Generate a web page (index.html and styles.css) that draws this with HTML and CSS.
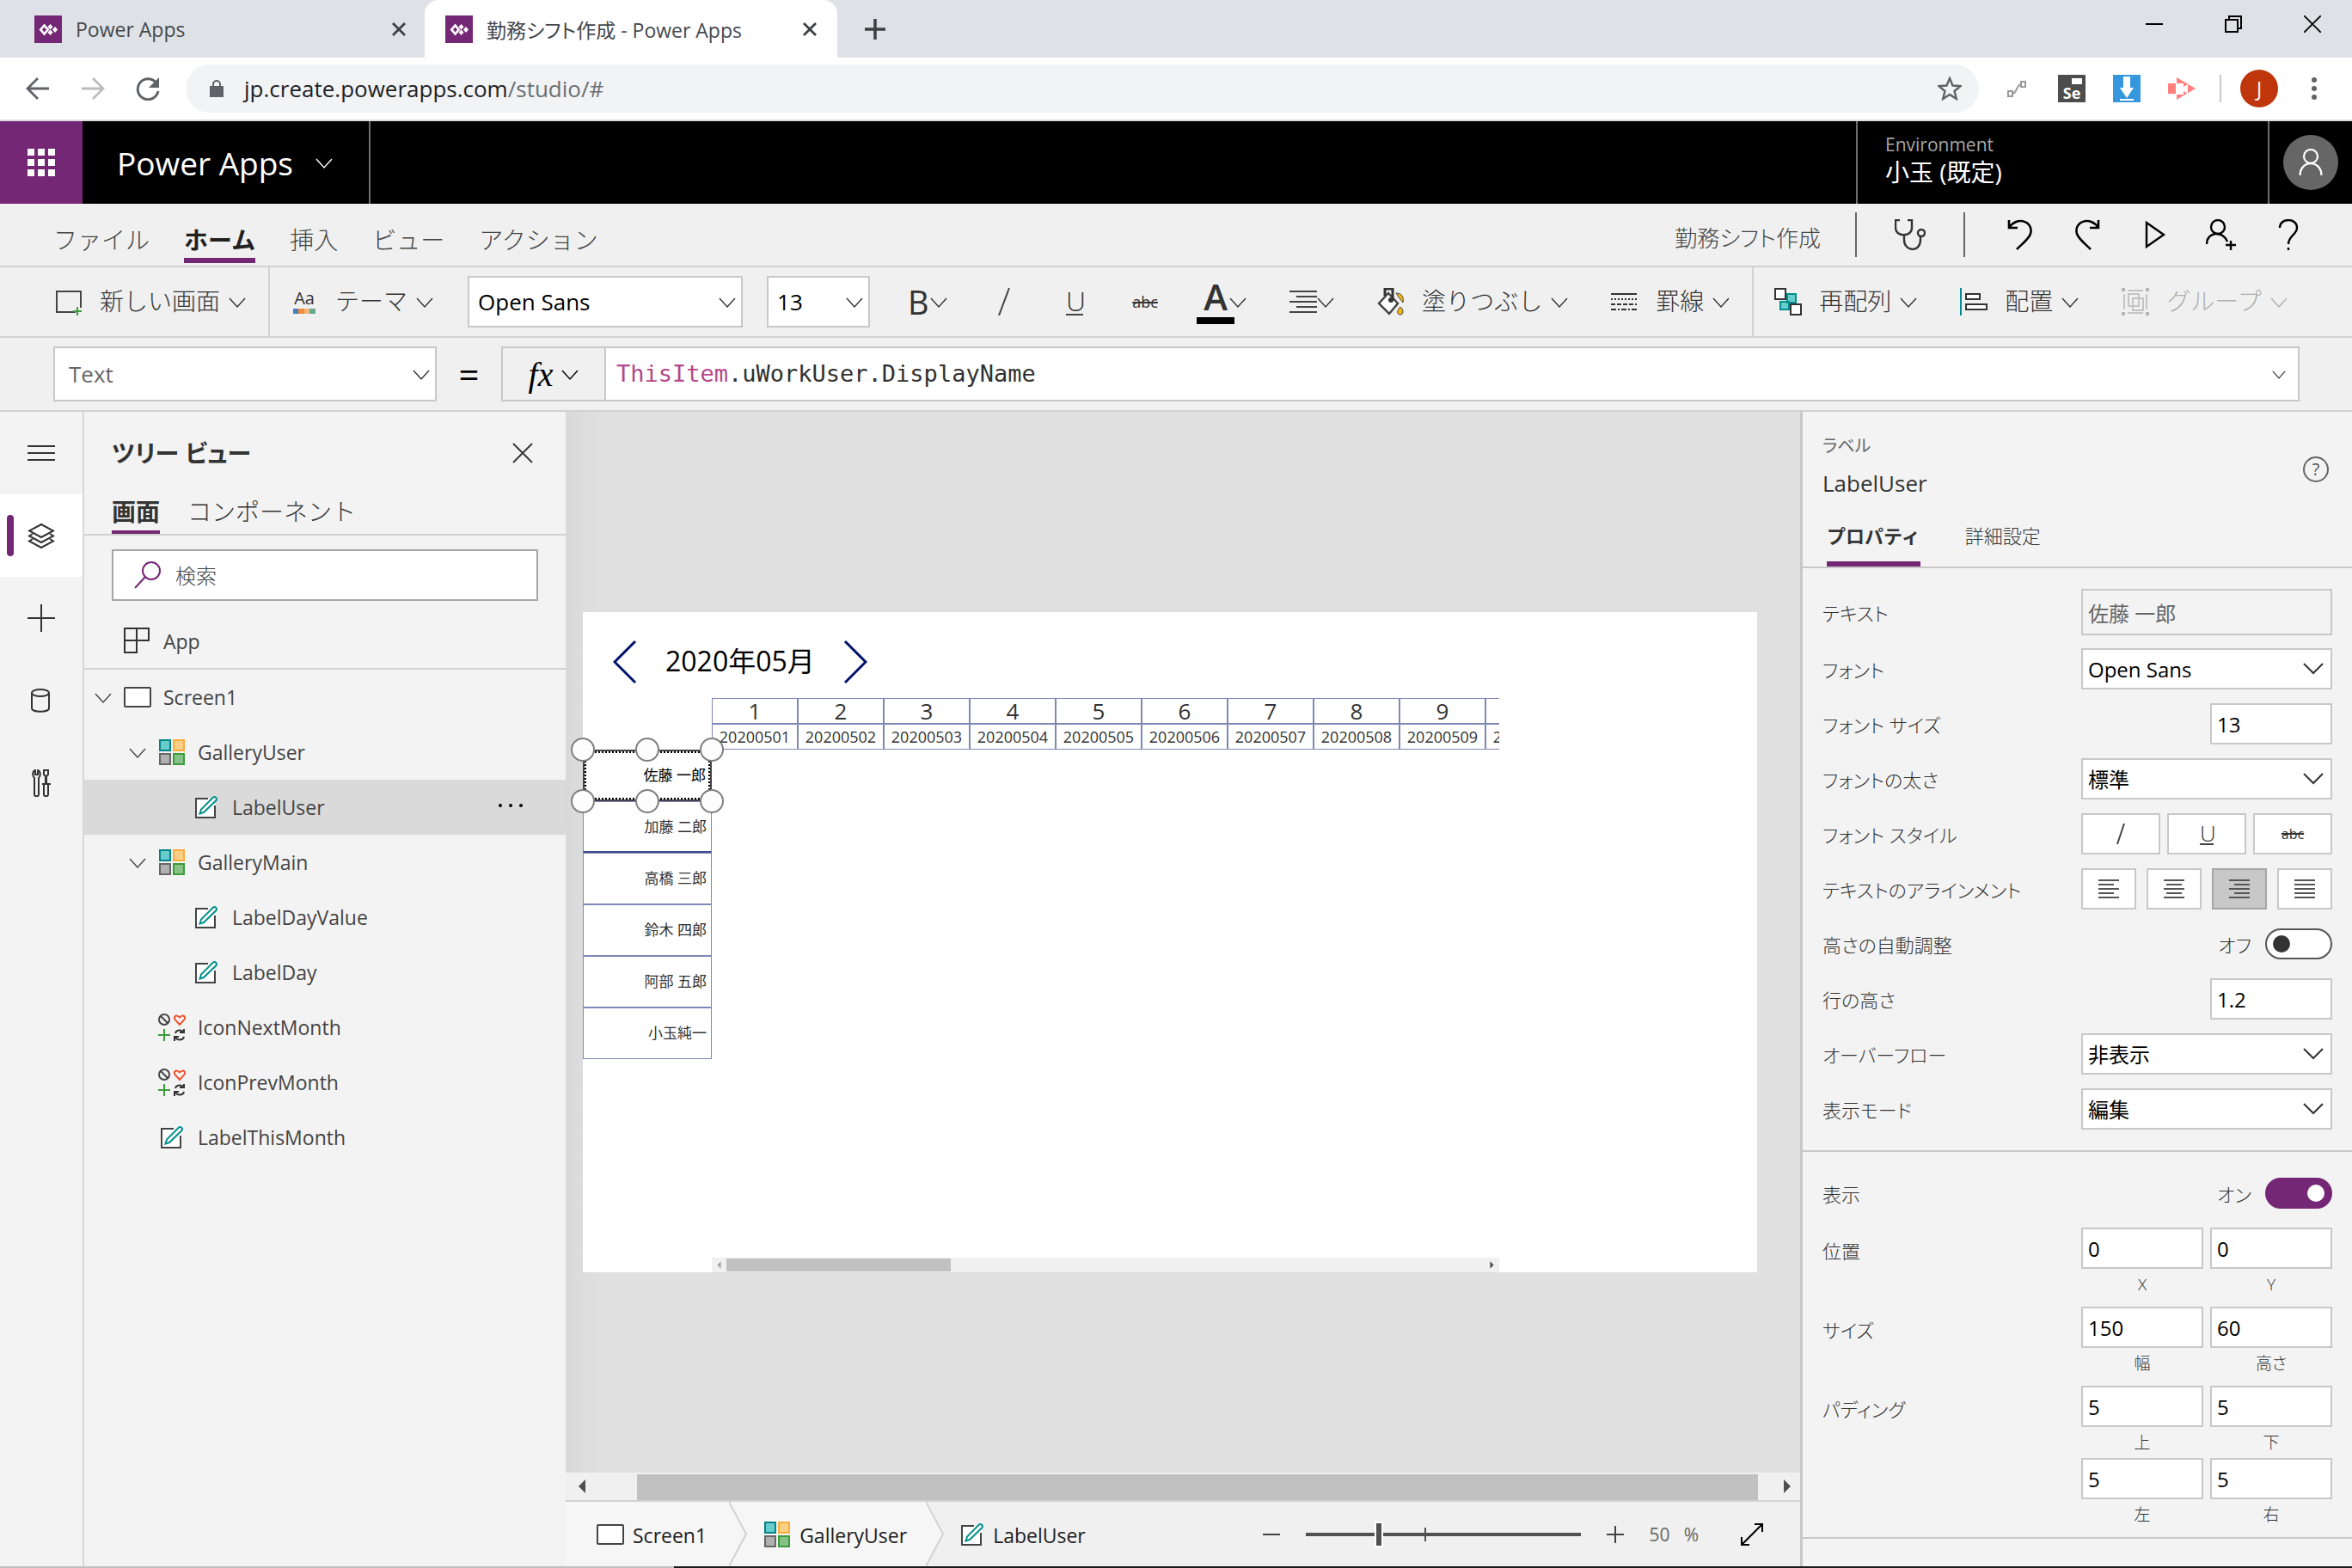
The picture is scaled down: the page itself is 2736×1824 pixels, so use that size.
FILE: index.html
```html
<!DOCTYPE html>
<html lang="ja">
<head>
  <meta charset="UTF-8" />
  <title>勤務シフト作成 - Power Apps</title>
  <link rel="stylesheet" href="styles.css">
</head>
<body>
  <!-- icon sprites -->
  <svg class="sprites" aria-hidden="true">
    <symbol id="i-chev" viewBox="0 0 20 20"><path d="M1 6l9 10 9-10" fill="none" stroke="currentColor" stroke-width="1.4"/></symbol>
    <symbol id="i-chev-bold" viewBox="0 0 24 24"><path d="M1 6l11 11L23 6" fill="none" stroke="currentColor" stroke-width="2"/></symbol>
    <symbol id="i-x" viewBox="0 0 24 24"><path d="M1 1l22 22M23 1L1 23" fill="none" stroke="currentColor" stroke-width="1.8"/></symbol>
    <symbol id="i-x-bold" viewBox="0 0 16 16"><path d="M1 1l14 14M15 1L1 15" fill="none" stroke="currentColor" stroke-width="2.8"/></symbol>
    <symbol id="i-logo" viewBox="0 0 32 32"><path d="M0 0h32v32H0z" fill="#742774"/><path d="M11.500 9.500l6 7-6 7-6-7z" fill="#fff"/><path d="M11.500 13.500l2.500 3-2.500 3-2.500-3z" fill="#742774"/><path d="M18.500 10l3 3.300-3 3.200-3-3.200zM18.500 16.500l3 3.300-3 3.200-3-3.200zM24 13l3 3.500-3 3.500-3-3.500z" fill="#fff"/></symbol>
    <symbol id="i-screen" viewBox="0 0 32 24"><rect x="1" y="1" width="30" height="22" rx="1" fill="#fff" stroke="#444" stroke-width="2"/></symbol>
    <symbol id="i-gallery" viewBox="0 0 30 30"><g stroke-width="2"><path d="M1 1h12v12H1z" fill="#66cccc" stroke="#038387"/><path d="M17 1h12v12H17z" fill="#fbcf85" stroke="#f9ae3b"/><path d="M1 17h12v12H1z" fill="#b0b0b0" stroke="#666"/><path d="M17 17h12v12H17z" fill="#86c286" stroke="#3b9c3b"/></g></symbol>
    <symbol id="i-label" viewBox="0 0 28 28"><path d="M25 11v15H2V4h15" fill="#fff"/><path d="M16 4H2v22h22V12" fill="none" stroke="#444" stroke-width="2"/><path d="M6.500 21.500l1.500-5L22 2.500c2-1.500 5 1 3.500 3.500L11 20z" fill="#fff" stroke="#038f8f" stroke-width="2"/></symbol>
    <symbol id="i-icons" viewBox="0 0 32 32"><g fill="none" stroke-width="2"><circle cx="7" cy="7" r="6" stroke="#444"/><path d="M3 3l8 8" stroke="#444"/><path d="M25 13l-5.500-6c-2-3 1-5.500 3.500-4l2 1.500 2-1.500c2.500-1.500 5.500 1 3.500 4z" stroke="#f0532d"/><path d="M7 18v14M0 25h14" stroke="#3b9c3b"/><path d="M20 23c1-4 7-5 10-1M30 18v4h-5M30 27c-1 4-7 5-10 1M19 32v-5h5" stroke="#333"/></g></symbol>
    <symbol id="i-al-left" viewBox="0 0 24 24"><path d="M0 2h24M0 7h18M0 12h24M0 17h18M0 22h24" stroke="#555" stroke-width="2"/></symbol>
    <symbol id="i-al-center" viewBox="0 0 24 24"><path d="M0 2h24M3 7h18M0 12h24M3 17h18M0 22h24" stroke="#555" stroke-width="2"/></symbol>
    <symbol id="i-al-right" viewBox="0 0 24 24"><path d="M0 2h24M6 7h18M0 12h24M6 17h18M0 22h24" stroke="#555" stroke-width="2"/></symbol>
    <symbol id="i-al-just" viewBox="0 0 24 24"><path d="M0 2h24M0 7h24M0 12h24M0 17h24M0 22h24" stroke="#555" stroke-width="2"/></symbol>
    <symbol id="i-person" viewBox="0 0 36 36"><g fill="none" stroke="currentColor" stroke-width="2.500"><circle cx="18" cy="10" r="9"/><path d="M4 35c0-21 28-21 28 0"/></g></symbol>
  </svg>

  <!-- browser -->
  <div class="tabstrip">
    <div class="tab">
      <svg class="s32"><use href="#i-logo"/></svg>
      <span class="tab-title">Power Apps</span>
      <button class="bare tab-close" aria-label="閉じる"><svg class="s16"><use href="#i-x-bold"/></svg></button>
    </div>
    <div class="tab active">
      <svg class="s32"><use href="#i-logo"/></svg>
      <span class="tab-title">勤務シフト作成 - Power Apps</span>
      <button class="bare tab-close" aria-label="閉じる"><svg class="s16"><use href="#i-x-bold"/></svg></button>
    </div>
    <button class="bare new-tab" aria-label="新しいタブ"><svg class="s24" viewBox="0 0 24 24"><path d="M12 0v24M0 12h24" stroke="#3c4043" stroke-width="3.500"/></svg></button>
    <div class="window-buttons">
      <button class="bare" aria-label="最小化"><svg class="s20" viewBox="0 0 20 20"><path d="M0 10h20" stroke="#000" stroke-width="2"/></svg></button>
      <button class="bare" aria-label="元に戻す"><svg class="s20" viewBox="0 0 20 20"><path d="M1 5h14v14H1zM5 5V1h14v14h-4" fill="none" stroke="#000" stroke-width="2"/></svg></button>
      <button class="bare" aria-label="閉じる"><svg class="s20" viewBox="0 0 20 20"><path d="M0 0l20 20M20 0L0 20" stroke="#000" stroke-width="1.800"/></svg></button>
    </div>
  </div>
  <div class="addressbar">
    <div class="nav-buttons">
      <button class="bare" aria-label="戻る"><svg class="s28" viewBox="0 0 28 28"><path d="M27 14H3M14 2L2 14l12 12" fill="none" stroke="#5f6368" stroke-width="2.800"/></svg></button>
      <button class="bare" aria-label="進む"><svg class="s28" viewBox="0 0 28 28"><path d="M1 14h24M14 2l12 12-12 12" fill="none" stroke="#babcbe" stroke-width="2.800"/></svg></button>
      <button class="bare" aria-label="再読み込み"><svg class="s28" viewBox="0 0 28 28"><path d="M23.500 7A12 12 0 1 0 26 17" fill="none" stroke="#5f6368" stroke-width="3"/><path d="M27 1v12H15z" fill="#5f6368"/></svg></button>
    </div>
    <div class="url">
      <svg class="lock" viewBox="0 0 16 20"><path d="M0 7h16v13H0z" fill="#5f6368"/><path d="M4 8V5a4 4 0 0 1 8 0v3" fill="none" stroke="#5f6368" stroke-width="2"/></svg>
      <a class="url-text" href="#">jp.create.powerapps.com<span>/studio/#</span></a>
      <svg class="s28" viewBox="0 0 28 28"><path d="M14 2l3.500 8.500 9 .7-7 5.800 2.300 9L14 21l-7.800 5 2.300-9-7-5.800 9-.7z" fill="none" stroke="#5f6368" stroke-width="2.400"/></svg>
    </div>
    <div class="extensions">
      <svg class="s32" viewBox="0 0 32 32"><path d="M6 19h5v6H6zM21 8h5v6h-5zM11 22c5 0 5-11 10-11" fill="none" stroke="#999" stroke-width="2"/></svg>
      <span class="ext-se">Se<i></i></span>
      <svg class="s32" viewBox="0 0 32 32"><path d="M0 0h32v32H0z" fill="#3598dc"/><path d="M12 2h8v13h4l-8 12-8-12h4zM8 28h16v2H8z" fill="#fff"/></svg>
      <svg class="s32" viewBox="0 0 32 32"><path d="M0 10h10V3l22 13-22 13v-7H0z" fill="#ff7f7f"/><path d="M9 10h9v4l5-3v11l-5-3v4H9z" fill="#fff"/></svg>
      <span class="ext-line"></span>
      <span class="chrome-avatar">J</span>
      <svg class="s32" viewBox="0 0 32 32" fill="#5f6368"><circle cx="16" cy="6" r="3"/><circle cx="16" cy="16" r="3"/><circle cx="16" cy="26" r="3"/></svg>
    </div>
  </div>

  <!-- suite header -->
  <header class="suite">
    <button class="waffle" aria-label="アプリ起動ツール"><svg class="s32" viewBox="0 0 32 32" fill="#fff"><path d="M0 0h8v8H0zM12 0h8v8h-8zM24 0h8v8h-8zM0 12h8v8H0zM12 12h8v8h-8zM24 12h8v8h-8zM0 24h8v8H0zM12 24h8v8h-8zM24 24h8v8h-8z"/></svg></button>
    <button class="product">Power Apps <svg class="s20"><use href="#i-chev"/></svg></button>
    <div class="environment">
      <span class="env-caption">Environment</span>
      <span class="env-name">小玉 (既定)</span>
    </div>
    <div class="account"><button class="account-btn" aria-label="アカウント"><svg class="s32"><use href="#i-person"/></svg></button></div>
  </header>

  <!-- menu -->
  <nav class="menu">
    <a href="#">ファイル</a>
    <a href="#" class="selected">ホーム</a>
    <a href="#">挿入</a>
    <a href="#">ビュー</a>
    <a href="#">アクション</a>
    <span class="app-name">勤務シフト作成</span>
    <div class="checker"><button class="bare" aria-label="アプリ チェッカー"><svg class="s36" viewBox="0 0 36 36"><g fill="none" stroke="#333" stroke-width="2.400"><path d="M6 1H1v9c0 11 19 11 19 0V1h-5M11 18v6c0 14 19 15 19 0v-4"/><circle cx="31" cy="16" r="4"/></g></svg></button></div>
    <div class="menu-icons">
      <button class="bare" aria-label="元に戻す"><svg class="s36" viewBox="0 0 36 36"><path d="M5 1v9h10M5 10C14-4 34 2 30 17c-2 6-9 11-16 18" fill="none" stroke="#000" stroke-width="2.600"/></svg></button>
      <button class="bare" aria-label="やり直し"><svg class="s36" viewBox="0 0 36 36"><path d="M31 1v9H21M31 10C22-4 2 2 6 17c2 6 9 11 16 18" fill="none" stroke="#000" stroke-width="2.600"/></svg></button>
      <button class="bare" aria-label="プレビュー"><svg class="s36" viewBox="0 0 36 36"><path d="M9 4l20 14L9 32z" fill="none" stroke="#000" stroke-width="2.400"/></svg></button>
      <button class="bare" aria-label="共有"><svg class="s36" viewBox="0 0 36 36"><path d="M1 29c0-15 19-16 24-3M29 25v11M23 30h12" fill="none" stroke="#000" stroke-width="2.400"/><circle cx="14" cy="9" r="8" fill="none" stroke="#000" stroke-width="2.400"/></svg></button>
      <button class="bare" aria-label="ヘルプ"><svg class="s36" viewBox="0 0 36 36"><path d="M8 10C8-2 28-2 28 10c0 8-10 9-10 19M18 33v3" fill="none" stroke="#000" stroke-width="2.400"/></svg></button>
    </div>
  </nav>

  <!-- toolbar -->
  <div class="toolbar">
    <div class="tool-group">
      <button class="tool"><svg class="s32" viewBox="0 0 32 32"><path d="M24 28H2V4h28v19" fill="none" stroke="#444" stroke-width="2"/><path d="M26 22v10M21 27h10" stroke="#3b9c3b" stroke-width="2"/></svg><span>新しい画面</span><svg class="s20 chev"><use href="#i-chev"/></svg></button>
    </div>
    <div class="tool-group main-group">
      <button class="tool theme"><i class="aa">Aa<b></b></i><span>テーマ</span><svg class="s20 chev"><use href="#i-chev"/></svg></button>
      <div class="pick pick-font"><select aria-label="フォント"><option>Open Sans</option></select><svg class="s20"><use href="#i-chev"/></svg></div>
      <div class="pick pick-size"><select aria-label="フォント サイズ"><option>13</option></select><svg class="s20"><use href="#i-chev"/></svg></div>
      <div class="tool-list">
        <button class="tool"><b class="glyph-b">B</b><svg class="s20"><use href="#i-chev"/></svg></button>
        <button class="tool" aria-label="斜体"><svg class="s32" viewBox="0 0 32 32"><path d="M10 32L22 0" stroke="#444" stroke-width="2"/></svg></button>
        <button class="tool"><i class="glyph-u">U</i></button>
        <button class="tool"><s class="glyph-s">abc</s></button>
        <button class="tool"><i class="glyph-a">A</i><svg class="s20"><use href="#i-chev"/></svg></button>
        <button class="tool" aria-label="配置"><svg class="s32" viewBox="0 0 32 32"><path d="M0 4h32M8 10h24M0 16h32M8 22h24M0 28h32" stroke="#444" stroke-width="2"/></svg><svg class="s20"><use href="#i-chev"/></svg></button>
        <button class="tool"><svg class="s32 bucket" viewBox="0 0 32 32"><path d="M22 6c8 0 9 6 8 11l-4-5zM27 22c4 3 4 9 0 9s-5-4 0-9z" fill="#f2b90c" stroke="#444"/><path d="M13 6l11 12-10 12L2 18z" fill="#fff" stroke="#444" stroke-width="2.500"/><path d="M9 9V1h9v13" fill="none" stroke="#333" stroke-width="3"/><circle cx="16" cy="14" r="3" fill="#333"/></svg><span>塗りつぶし</span><svg class="s20 chev"><use href="#i-chev"/></svg></button>
        <button class="tool"><svg class="s32" viewBox="0 0 32 32"><g stroke="#333" stroke-width="2"><path d="M0 7h30"/><path d="M0 13h30" stroke-dasharray="2 2"/><path d="M0 19h30" stroke-dasharray="5 2"/><path d="M0 25h30" stroke-dasharray="6 2 2 2"/></g></svg><span>罫線</span><svg class="s20 chev"><use href="#i-chev"/></svg></button>
      </div>
    </div>
    <div class="tool-group last-group">
      <button class="tool"><svg class="s32" viewBox="0 0 32 32"><g stroke-width="2"><path d="M15 7h10v10H15zM7 16h10v9H7z" fill="#6cc" stroke="#038f8f"/><path d="M1 1h12v12H1zM19 19h12v12H19z" fill="#fff" stroke="#333"/></g></svg><span>再配列</span><svg class="s20 chev"><use href="#i-chev"/></svg></button>
      <button class="tool"><svg class="s32" viewBox="0 0 32 32"><path d="M1 0v32" stroke="#038f8f" stroke-width="2"/><path d="M7 7h16v6H7zM7 19h24v6H7z" fill="#fff" stroke="#333" stroke-width="2"/></svg><span>配置</span><svg class="s20 chev"><use href="#i-chev"/></svg></button>
      <button class="tool off" disabled><svg class="s32" viewBox="0 0 32 32"><path d="M0 0h4v4H0zM28 0h4v4h-4zM0 28h4v4H0zM28 28h4v4h-4z" fill="#b5b5b5"/><path d="M3 7v18M7 3h18M7 29h18M29 7v18M8 7h12v14H8zM13 12h12v14H13z" fill="none" stroke="#c4c4c4" stroke-width="2"/></svg><span>グループ</span><svg class="s20 chev"><use href="#i-chev"/></svg></button>
    </div>
  </div>

  <!-- formula bar -->
  <div class="formula">
    <div class="pick pick-prop"><select aria-label="プロパティ"><option>Text</option></select><svg class="s20"><use href="#i-chev"/></svg></div>
    <span class="equals">=</span>
    <button class="fx"><i>fx</i><svg class="s20"><use href="#i-chev"/></svg></button>
    <div class="formula-text" role="textbox" contenteditable="true" spellcheck="false"><code><em>ThisItem</em>.uWorkUser.DisplayName</code></div>
    <button class="formula-open" aria-label="展開"><svg class="s16"><use href="#i-chev"/></svg></button>
  </div>

  <div class="studio">
    <!-- rail -->
    <div class="rail">
      <button aria-label="メニュー"><svg class="s32" viewBox="0 0 32 32"><path d="M0 8h32M0 16h32M0 24h32" stroke="#333" stroke-width="2"/></svg></button>
      <button class="current" aria-label="ツリー ビュー"><svg class="s32" viewBox="0 0 32 32"><g fill="none" stroke="#333" stroke-width="2"><path d="M16 3l14 7.500L16 18 2 10.500z"/><path d="M6 14l-4 2.500L16 24l14-7.500-4-2.500"/><path d="M6 20l-4 2.500L16 30l14-7.500-4-2.500"/></g></svg></button>
      <button aria-label="挿入"><svg class="s32" viewBox="0 0 32 32"><path d="M16 0v32M0 16h32" stroke="#333" stroke-width="2"/></svg></button>
      <button aria-label="データ"><svg class="s32" viewBox="0 0 32 32"><g fill="none" stroke="#333" stroke-width="2"><ellipse cx="15" cy="7" rx="10" ry="4"/><path d="M5 7v18c0 5 20 5 20 0V7"/></g></svg></button>
      <button aria-label="高度なツール"><svg class="s32" viewBox="0 0 32 32"><g fill="none" stroke="#333" stroke-width="2"><path d="M9 1v5h3V1c4 2 3 7 1 9v19c0 3-5 3-5 0V10C5 7 6 2 9 1zM19 1h5v5l-2 2v9h-1V8l-2-2zM17 17h10M19 17v12c0 3 5 3 5 0V17"/></g></svg></button>
    </div>

    <!-- tree view -->
    <aside class="tree">
      <div class="tree-head">
        <h2>ツリー ビュー</h2>
        <button class="bare" aria-label="閉じる"><svg class="s24"><use href="#i-x"/></svg></button>
      </div>
      <div class="tree-tabs"><a href="#" class="selected">画面</a><a href="#">コンポーネント</a></div>
      <label class="search">
        <svg class="s32" viewBox="0 0 32 32"><circle cx="20" cy="11" r="10" fill="none" stroke="#742774" stroke-width="2"/><path d="M13 18L1 31" stroke="#742774" stroke-width="2"/></svg>
        <input type="text" placeholder="検索" aria-label="検索">
      </label>
      <div class="node app"><svg class="s32" viewBox="0 0 32 32"><path d="M1 1h28v14H1zM15 1v28H1V15" fill="none" stroke="#333" stroke-width="2"/></svg><span>App</span></div>
      <div class="node"><svg class="s20 tw"><use href="#i-chev"/></svg><svg class="s32 scr"><use href="#i-screen"/></svg><span>Screen1</span></div>
      <div class="node lv1"><svg class="s20 tw"><use href="#i-chev"/></svg><svg class="s32 gal"><use href="#i-gallery"/></svg><span>GalleryUser</span></div>
      <div class="node lv2 picked"><svg class="s32 lab"><use href="#i-label"/></svg><span>LabelUser</span><button class="bare more" aria-label="その他"><svg class="s32" viewBox="0 0 32 32"><circle cx="4" cy="14" r="2"/><circle cx="16" cy="14" r="2"/><circle cx="28" cy="14" r="2"/></svg></button></div>
      <div class="node lv1"><svg class="s20 tw"><use href="#i-chev"/></svg><svg class="s32 gal"><use href="#i-gallery"/></svg><span>GalleryMain</span></div>
      <div class="node lv2"><svg class="s32 lab"><use href="#i-label"/></svg><span>LabelDayValue</span></div>
      <div class="node lv2"><svg class="s32 lab"><use href="#i-label"/></svg><span>LabelDay</span></div>
      <div class="node lv1 leaf"><svg class="s32"><use href="#i-icons"/></svg><span>IconNextMonth</span></div>
      <div class="node lv1 leaf"><svg class="s32"><use href="#i-icons"/></svg><span>IconPrevMonth</span></div>
      <div class="node lv1 leaf"><svg class="s32 lab"><use href="#i-label"/></svg><span>LabelThisMonth</span></div>
    </aside>

    <!-- canvas -->
    <main class="stage">
      <div class="stage-view">
        <div class="screen">
          <div class="month">
            <svg viewBox="0 0 28 52"><path d="M26 2L2 26l24 24" fill="none" stroke="#00126b" stroke-width="3"/></svg>
            <span>2020年05月</span>
            <svg viewBox="0 0 28 52"><path d="M2 2l24 24L2 50" fill="none" stroke="#00126b" stroke-width="3"/></svg>
          </div>
          <div class="shift">
            <ul class="users">
              <li class="editing">佐藤 一郎<i class="h tl"></i><i class="h tc"></i><i class="h tr"></i><i class="h bl"></i><i class="h bc"></i><i class="h br"></i></li>
              <li class="dark">加藤 二郎</li>
              <li>高橋 三郎</li>
              <li>鈴木 四郎</li>
              <li>阿部 五郎</li>
              <li>小玉純一</li>
            </ul>
            <div class="days">
              <table>
                <tr><th>1</th><th>2</th><th>3</th><th>4</th><th>5</th><th>6</th><th>7</th><th>8</th><th>9</th><th></th></tr>
                <tr><td>20200501</td><td>20200502</td><td>20200503</td><td>20200504</td><td>20200505</td><td>20200506</td><td>20200507</td><td>20200508</td><td>20200509</td><td>20200510</td></tr>
              </table>
              <div class="hscroll">
                <svg viewBox="0 0 16 16"><path d="M10 4v8L6 8z" fill="#a3a3a3"/></svg>
                <i class="thumb"></i>
                <svg viewBox="0 0 16 16"><path d="M6 4v8l4-4z" fill="#505050"/></svg>
              </div>
            </div>
          </div>
        </div>
      </div>
      <div class="stage-scroll">
        <svg viewBox="0 0 32 32"><path d="M23 8v16l-8-8z" fill="#505050"/></svg>
        <i class="thumb"></i>
        <svg viewBox="0 0 32 32"><path d="M13 8v16l8-8z" fill="#505050"/></svg>
      </div>
      <footer class="status">
        <a class="crumb" href="#"><svg class="s32 scr"><use href="#i-screen"/></svg><span>Screen1</span></a>
        <svg class="crumb-edge" viewBox="0 0 22 76" preserveAspectRatio="none"><path d="M0 0l20 38L0 76z" fill="#f6f6f6"/><path d="M0 0l20 38L0 76" fill="none" stroke="#d2d2d2" stroke-width="2"/></svg>
        <a class="crumb" href="#"><svg class="s32 gal"><use href="#i-gallery"/></svg><span>GalleryUser</span></a>
        <svg class="crumb-edge end" viewBox="0 0 22 76" preserveAspectRatio="none"><path d="M0 0l20 38L0 76z" fill="#f6f6f6"/><path d="M0 0l20 38L0 76" fill="none" stroke="#d2d2d2" stroke-width="2"/></svg>
        <a class="crumb end" href="#"><svg class="s28"><use href="#i-label"/></svg><span>LabelUser</span></a>
        <div class="zoom">
          <button class="bare" aria-label="縮小"><svg class="s20" viewBox="0 0 20 20"><path d="M0 10h20" stroke="#444" stroke-width="2"/></svg></button>
          <input type="range" min="10" max="165" value="50" aria-label="ズーム">
          <button class="bare" aria-label="拡大"><svg class="s20" viewBox="0 0 20 20"><path d="M0 10h20M10 0v20" stroke="#444" stroke-width="2"/></svg></button>
          <span class="zoom-value">50<small>%</small></span>
          <button class="bare fit" aria-label="ウィンドウに合わせる"><svg class="s28" viewBox="0 0 28 28"><path d="M2 26L26 2M17 2h9v9M2 17v9h9" fill="none" stroke="#000" stroke-width="2"/></svg></button>
        </div>
      </footer>
    </main>

    <!-- properties -->
    <aside class="props">
      <div class="props-head">
        <div>
          <div class="kind">ラベル</div>
          <div class="name">LabelUser</div>
        </div>
        <button class="help" aria-label="ヘルプ">?</button>
      </div>
      <div class="props-tabs"><a href="#" class="selected">プロパティ</a><a href="#">詳細設定</a></div>
      <div class="section">
        <div class="row tall"><label for="p-text">テキスト</label><input class="wide" type="text" id="p-text" value="佐藤 一郎" disabled></div>
        <div class="row"><label for="p-font">フォント</label><div class="pick"><select id="p-font"><option>Open Sans</option></select><svg class="s24"><use href="#i-chev-bold"/></svg></div></div>
        <div class="row"><label for="p-size">フォント サイズ</label><input type="text" id="p-size" value="13"></div>
        <div class="row"><label for="p-weight">フォントの太さ</label><div class="pick"><select id="p-weight"><option>標準</option></select><svg class="s24"><use href="#i-chev-bold"/></svg></div></div>
        <div class="row"><span>フォント スタイル</span>
          <div class="styles">
            <button aria-label="斜体"><svg class="s24" viewBox="0 0 24 24"><path d="M8 24L16 0" stroke="#444" stroke-width="2"/></svg></button>
            <button><i class="glyph-u">U</i></button>
            <button><s class="glyph-s">abc</s></button>
          </div>
        </div>
        <div class="row"><span>テキストのアラインメント</span>
          <div class="aligns">
            <button aria-label="左揃え"><svg class="s24"><use href="#i-al-left"/></svg></button>
            <button aria-label="中央揃え"><svg class="s24"><use href="#i-al-center"/></svg></button>
            <button aria-label="右揃え" class="on"><svg class="s24"><use href="#i-al-right"/></svg></button>
            <button aria-label="両端揃え"><svg class="s24"><use href="#i-al-just"/></svg></button>
          </div>
        </div>
        <div class="row"><label for="p-auto">高さの自動調整</label><div class="switch"><span>オフ</span><input type="checkbox" id="p-auto"></div></div>
        <div class="row"><label for="p-line">行の高さ</label><input type="text" id="p-line" value="1.2"></div>
        <div class="row"><label for="p-over">オーバーフロー</label><div class="pick"><select id="p-over"><option>非表示</option></select><svg class="s24"><use href="#i-chev-bold"/></svg></div></div>
        <div class="row"><label for="p-mode">表示モード</label><div class="pick"><select id="p-mode"><option>編集</option></select><svg class="s24"><use href="#i-chev-bold"/></svg></div></div>
      </div>
      <div class="section">
        <div class="row"><label for="p-show">表示</label><div class="switch"><span>オン</span><input type="checkbox" id="p-show" checked></div></div>
        <div class="row pair"><span>位置</span><div class="fields">
          <label><input type="text" value="0">X</label><label><input type="text" value="0">Y</label>
        </div></div>
        <div class="row pair"><span>サイズ</span><div class="fields">
          <label><input type="text" value="150">幅</label><label><input type="text" value="60">高さ</label>
        </div></div>
        <div class="row pair"><span>パディング</span><div class="fields">
          <label><input type="text" value="5">上</label><label><input type="text" value="5">下</label>
          <label><input type="text" value="5">左</label><label><input type="text" value="5">右</label>
        </div></div>
      </div>
    </aside>
  </div>
  <div class="taskbar"></div>
</body>
</html>
```
FILE: styles.css
```css
* {
  box-sizing: border-box;
}
body {
  margin: 0;
  height: 100vh;
  display: flex;
  flex-direction: column;
  overflow: hidden;
  font-family: "Open Sans", "Noto Sans CJK JP", sans-serif;
  font-size: 23px;
  color: #333;
  background: #f3f3f3;
}
button, input, select {
  font: inherit;
  color: inherit;
}
button {
  padding: 0;
  border: none;
  background: none;
  cursor: pointer;
}
a {
  color: inherit;
  text-decoration: none;
}
svg {
  display: block;
  flex: none;
}
.sprites {
  position: absolute;
  width: 0;
  height: 0;
}
.bare {
  display: flex;
}
.s16 { width: 16px; height: 16px; }
.s20 { width: 20px; height: 20px; }
.s24 { width: 24px; height: 24px; }
.s28 { width: 28px; height: 28px; }
.s32 { width: 32px; height: 32px; }
.s36 { width: 36px; height: 36px; }

/* browser */
.tabstrip {
  height: 67px;
  flex: none;
  display: flex;
  background: #dee1e6;
}
.tab {
  width: 494px;
  display: flex;
  align-items: center;
  gap: 16px;
  padding: 0 22px 0 40px;
  color: #45494d;
}
.tab.active {
  width: 480px;
  padding: 0 24px;
  background: #fff;
  border-radius: 16px 16px 0 0;
}
.tab-title {
  flex: 1;
  white-space: nowrap;
  font-feature-settings: "palt";
}
.tab-close {
  color: #3c4043;
}
.new-tab {
  align-self: center;
  margin-left: 32px;
}
.window-buttons {
  margin-left: auto;
  display: flex;
  gap: 72px;
  padding: 18px 36px 0 0;
}
.addressbar {
  height: 74px;
  flex: none;
  display: flex;
  align-items: center;
  background: #fff;
  border-bottom: 2px solid #dadce0;
}
.nav-buttons {
  display: flex;
  gap: 36px;
  padding: 0 30px;
}
.url {
  flex: 1;
  height: 56px;
  display: flex;
  align-items: center;
  padding: 0 20px 0 28px;
  border-radius: 28px;
  background: #f1f3f4;
}
.lock {
  width: 16px;
  height: 20px;
}
.url-text {
  flex: 1;
  margin-left: 24px;
  font-size: 26px;
  color: #202124;
}
.url-text span {
  color: #6b6f73;
}
.extensions {
  display: flex;
  align-items: center;
  gap: 32px;
  padding: 0 28px;
}
.ext-se {
  position: relative;
  width: 32px;
  height: 32px;
  padding-top: 8px;
  background: #4d4d4d;
  color: #fff;
  font-size: 18px;
  line-height: 26px;
  font-weight: bold;
  text-align: center;
}
.ext-se i {
  position: absolute;
  top: 4px;
  right: 4px;
  width: 12px;
  height: 7px;
  background: #fff;
}
.ext-line {
  width: 2px;
  height: 32px;
  margin: 0 -10px 0 -4px;
  background: #c8c8c8;
}
.chrome-avatar {
  width: 44px;
  height: 44px;
  margin-right: -6px;
  border-radius: 50%;
  background: #bf360c;
  color: #fff;
  line-height: 44px;
  text-align: center;
}

/* suite header */
.suite {
  height: 96px;
  flex: none;
  display: flex;
  background: #000;
  color: #fff;
}
.waffle {
  width: 96px;
  display: flex;
  align-items: center;
  justify-content: center;
  background: #742774;
}
.product {
  display: flex;
  align-items: center;
  gap: 26px;
  padding: 0 42px 0 40px;
  border-right: 2px solid #6e6e6e;
  font-size: 37px;
}
.environment {
  width: 479px;
  margin-left: auto;
  padding: 13px 0 0 32px;
  border-left: 2px solid #6e6e6e;
  display: flex;
  flex-direction: column;
}
.env-caption {
  font-size: 21px;
  line-height: 28px;
  color: #a6a6a6;
}
.env-name {
  font-size: 28px;
  line-height: 36px;
}
.account {
  width: 98px;
  border-left: 2px solid #6e6e6e;
  display: flex;
  align-items: center;
  justify-content: center;
}
.account-btn {
  width: 64px;
  height: 64px;
  display: flex;
  align-items: center;
  justify-content: center;
  border-radius: 50%;
  background: #666;
}

/* menu */
.menu {
  height: 74px;
  flex: none;
  display: flex;
  align-items: flex-end;
  gap: 40px;
  padding-left: 62px;
  background: #f0f0f0;
  border-bottom: 2px solid #d2d2d2;
  font-size: 28px;
  font-weight: 300;
  color: #444;
}
.menu > a {
  height: 49px;
  margin-bottom: 3px;
  line-height: 44px;
  border-bottom: 6px solid transparent;
}
.menu .selected {
  color: #212121;
  font-weight: bold;
  border-color: #742774;
}
.app-name {
  margin-left: auto;
  align-self: center;
  padding-top: 6px;
  font-size: 26px;
  font-feature-settings: "palt";
}
.checker {
  align-self: center;
  display: flex;
  align-items: center;
  height: 52px;
  padding: 0 44px;
  border: solid #666;
  border-width: 0 2px;
}
.menu-icons {
  align-self: center;
  display: flex;
  gap: 42px;
  padding: 0 56px 0 6px;
}

/* toolbar */
.toolbar {
  height: 82px;
  flex: none;
  display: flex;
  background: #f0f0f0;
  border-bottom: 2px solid #d2d2d2;
  font-size: 28px;
  font-weight: 300;
  color: #333;
}
.tool-group {
  display: flex;
  align-items: center;
  padding: 0 26px 0 64px;
  border-right: 2px solid #d2d2d2;
}
.main-group {
  padding: 0 26px 0 24px;
}
.last-group {
  gap: 50px;
  padding-left: 24px;
  border: none;
}
.tool {
  display: flex;
  align-items: center;
  height: 60px;
  white-space: nowrap;
}
.tool > span {
  margin-left: 20px;
  padding-bottom: 4px;
}
.tool .chev {
  margin-left: 10px;
}
.tool.off {
  color: #b0b0b0;
}
.theme {
  margin-right: 40px;
}
.aa {
  width: 32px;
  font-size: 20px;
  line-height: 20px;
  font-weight: 400;
  font-style: normal;
}
.aa b {
  display: block;
  width: 26px;
  height: 6px;
  margin: 2px auto 0;
  background: linear-gradient(90deg, #4a7ebb 25%, #f08c3c 25% 50%, #f2b87a 50% 75%, #6aa78f 75%);
}
.tool-list {
  display: flex;
  gap: 50px;
  margin-left: 44px;
}
.glyph-b {
  width: 26px;
  font-size: 38px;
  font-weight: 400;
  text-align: left;
}
.glyph-u {
  width: 20px;
  margin: 0 6px;
  border-bottom: 2px solid #444;
  font-size: 32px;
  line-height: 30px;
  font-weight: 300;
  font-style: normal;
  text-align: center;
}
.glyph-s {
  width: 32px;
  font-size: 18px;
  font-weight: 400;
  text-align: center;
  text-decoration: line-through 2px;
}
.glyph-a {
  width: 44px;
  margin: 0 -6px;
  padding-bottom: 4px;
  font-size: 42px;
  line-height: 40px;
  font-weight: 600;
  font-style: normal;
  text-align: center;
  border-bottom: 8px solid #000;
}

/* drop-downs */
.pick {
  display: grid;
  align-items: center;
}
.pick > select,
.pick > svg {
  grid-area: 1 / 1;
}
.pick > svg {
  justify-self: end;
  margin-right: 8px;
  pointer-events: none;
}
.pick > select {
  width: 100%;
  height: 60px;
  padding: 0 10px;
  appearance: none;
  border: 2px solid #c8c8c8;
  border-radius: 0;
  background: #fff;
  color: #000;
  font-size: 26px;
  font-weight: 400;
}
.pick-font {
  width: 320px;
  margin-right: 28px;
}
.pick-size {
  width: 120px;
}

/* formula bar */
.formula {
  height: 86px;
  flex: none;
  display: flex;
  align-items: center;
  padding: 0 61px 0 62px;
  background: #f0f0f0;
  border-bottom: 2px solid #d2d2d2;
}
.pick-prop {
  width: 446px;
}
.pick-prop > select {
  height: 64px;
  padding-left: 16px;
  color: #666;
}
.equals {
  width: 75px;
  text-align: center;
  font-size: 42px;
  line-height: 64px;
  color: #000;
}
.fx {
  width: 120px;
  height: 64px;
  display: flex;
  align-items: center;
  justify-content: center;
  gap: 10px;
  border: 2px solid #c8c8c8;
  border-right: none;
  color: #000;
}
.fx i {
  font-family: "Liberation Serif", serif;
  font-size: 40px;
}
.formula-text {
  flex: 1;
  height: 64px;
  padding: 0 12px;
  border: 2px solid #c8c8c8;
  border-right: none;
  background: #fff;
  line-height: 60px;
}
.formula-text code {
  font-family: "DejaVu Sans Mono", monospace;
  font-size: 27px;
  color: #323130;
}
.formula-text em {
  font-style: normal;
  color: #b5468b;
}
.formula-open {
  width: 32px;
  height: 64px;
  display: flex;
  align-items: center;
  border: 2px solid #c8c8c8;
  border-left: none;
  background: #fff;
}

/* studio */
.studio {
  flex: 1;
  min-height: 0;
  display: flex;
}
.rail {
  width: 98px;
  flex: none;
  border-right: 2px solid #d8d8d8;
}
.rail button {
  width: 96px;
  height: 96px;
  display: flex;
  align-items: center;
  padding-left: 32px;
}
.rail .current {
  padding-left: 8px;
  background: #fff;
}
.rail .current::before {
  content: "";
  width: 8px;
  height: 48px;
  margin-right: 16px;
  border-radius: 4px;
  background: #742774;
}

/* tree */
.tree {
  width: 560px;
  flex: none;
}
.tree-head {
  height: 96px;
  display: flex;
  align-items: center;
  justify-content: space-between;
  padding: 0 38px 0 32px;
}
.tree-head h2 {
  margin: 0;
  font-size: 28px;
  line-height: 40px;
  font-weight: bold;
  font-feature-settings: "palt";
}
.tree-tabs {
  height: 48px;
  display: flex;
  gap: 32px;
  padding-left: 32px;
  border-bottom: 2px solid #d2d2d2;
  font-size: 28px;
  line-height: 40px;
  font-weight: 300;
}
.tree-tabs .selected {
  font-weight: bold;
  border-bottom: 4px solid #742774;
}
.search {
  height: 60px;
  display: flex;
  align-items: center;
  gap: 16px;
  margin: 16px 32px;
  padding-left: 24px;
  border: 2px solid #a6a6a6;
  background: #fff;
}
.search input {
  flex: 1;
  border: none;
  padding: 0;
  font-size: 24px;
  font-weight: 300;
}
.search input::placeholder {
  color: #444;
}
.node {
  height: 64px;
  display: flex;
  align-items: center;
  padding-left: 12px;
  color: #444;
}
.node > span {
  margin-left: 14px;
}
.node.app {
  padding-left: 46px;
  border-bottom: 2px solid #d2d2d2;
}
.node .tw {
  margin-right: 14px;
}
.lv1 {
  padding-left: 52px;
}
.lv1.leaf {
  padding-left: 86px;
}
.lv2 {
  padding-left: 126px;
}
.picked {
  background: #dadada;
}
.more {
  margin: 0 48px 0 auto;
}
.scr {
  height: 24px;
}
.gal {
  height: 30px;
}
.lab {
  height: 28px;
}

/* stage */
.stage {
  flex: 1;
  min-width: 0;
  display: flex;
  flex-direction: column;
}
.stage-view {
  flex: 1;
  display: flex;
  align-items: center;
  padding-left: 20px;
  background: linear-gradient(90deg, #d9d9d9, #e0e0e0 40px);
}
.screen {
  width: 1366px;
  height: 768px;
  display: flex;
  flex-direction: column;
  background: #fff;
  color: #000;
}
.month {
  height: 100px;
  display: flex;
  align-items: center;
  gap: 33px;
  padding: 16px 0 0 35px;
  font-size: 32px;
  font-weight: 400;
}
.month svg {
  width: 28px;
  height: 52px;
}
.month span {
  line-height: 40px;
  padding-bottom: 2px;
}
.shift {
  flex: 1;
  display: flex;
}
.users {
  z-index: 1;
  width: 150px;
  margin: 60px 0 0;
  padding: 0;
  list-style: none;
  font-size: 17px;
}
.users li {
  position: relative;
  height: 60px;
  padding-right: 5px;
  border: 1px solid #7f88b5;
  line-height: 58px;
  text-align: right;
  color: #333;
}
.users .dark {
  border-bottom: 2px solid #3f4d90;
}
.users .editing {
  border: 2px solid #444;
  outline: 2px dotted #000;
  outline-offset: -4px;
  line-height: 56px;
  color: #000;
}
/* resize handles of the selected control */
.h {
  position: absolute;
  width: 28px;
  height: 28px;
  border: 2px solid #808080;
  border-radius: 50%;
  background: #fdfdfd;
}
.tl, .tc, .tr { top: -16px; }
.bl, .bc, .br { bottom: -16px; }
.users .editing {
  z-index: 1;
}
.tl, .bl { left: -16px; }
.tc, .bc { left: 59px; }
.tr, .br { right: -16px; }
.days {
  width: 916px;
  display: flex;
  flex-direction: column;
  justify-content: space-between;
  overflow-x: clip;
}
.days table {
  width: 1000px;
  table-layout: fixed;
  border-spacing: 0;
}
.days th,
.days td {
  height: 30px;
  padding: 0;
  border: 1px solid #7f88b5;
  text-align: center;
  font-size: 18px;
  line-height: 28px;
  font-weight: normal;
  color: #333;
}
.days th {
  font-size: 26px;
}
.hscroll,
.stage-scroll {
  display: flex;
  align-items: center;
  background: #f0f0f0;
}
.hscroll {
  height: 17px;
}
.hscroll svg {
  width: 17px;
  height: 17px;
}
.thumb {
  background: #c1c1c1;
}
.hscroll .thumb {
  width: 261px;
  height: 15px;
  margin-right: auto;
}
.stage-scroll {
  height: 32px;
  flex: none;
  align-items: flex-end;
}
.stage-scroll svg {
  width: 32px;
  height: 32px;
}
.stage-scroll .thumb {
  flex: 1;
  height: 30px;
  margin: 0 17px 0 51px;
}

/* status bar */
.status {
  height: 77px;
  flex: none;
  display: flex;
  border-top: 2px solid #d2d2d2;
  background: #f0f0f0;
}
.crumb {
  display: flex;
  align-items: center;
  gap: 10px;
  padding: 0 26px 0 36px;
  background: #f6f6f6;
  color: #212121;
}
.crumb ~ .crumb {
  padding: 0 22px 0 18px;
}
.crumb > span {
  padding-top: 2px;
}
.crumb.end {
  background: none;
}
.crumb-edge {
  width: 22px;
  height: 100%;
  background: #f6f6f6;
}
.crumb-edge.end {
  background: none;
}
.zoom {
  margin-left: auto;
  display: flex;
  align-items: center;
  gap: 30px;
  padding-right: 42px;
}
.zoom input {
  width: 320px;
  height: 30px;
  margin: 0;
  appearance: none;
  background:
    linear-gradient(#505050, #505050) 138px 50% / 2px 16px no-repeat,
    linear-gradient(#505050, #505050) 0 50% / 100% 4px no-repeat;
}
.zoom input::-webkit-slider-thumb {
  appearance: none;
  width: 10px;
  height: 30px;
  border: 2px solid #fff;
  background: #505050;
}
.zoom-value {
  font-size: 21px;
  color: #666;
}
.zoom-value small {
  margin-left: 16px;
  font-size: 21px;
}
.fit {
  margin-left: 18px;
}

/* properties */
.props {
  width: 642px;
  flex: none;
  overflow: hidden;
  border-left: 3px solid #c8c8c8;
  font-size: 22px;
  font-feature-settings: "palt";
}
.props-head {
  height: 114px;
  display: flex;
  justify-content: space-between;
  padding: 22px 27px 0 23px;
}
.kind {
  font-size: 20px;
  line-height: 36px;
  color: #666;
}
.name {
  font-size: 26px;
  line-height: 50px;
}
.help {
  width: 30px;
  height: 30px;
  margin-top: 30px;
  border: 2px solid #666;
  border-radius: 50%;
  font-size: 20px;
  line-height: 26px;
  color: #555;
}
.props-tabs {
  height: 68px;
  display: flex;
  gap: 52px;
  padding-left: 28px;
  border-bottom: 2px solid #c8c8c8;
  line-height: 60px;
  font-feature-settings: normal;
}
.props-tabs a {
  font-weight: 300;
}
.props-tabs .selected {
  font-weight: bold;
  border-bottom: 6px solid #742774;
}
.section {
  padding: 24px 23px 24px;
  border-bottom: 2px solid #c8c8c8;
}
.section:last-child {
  padding-bottom: 8px;
}
.row {
  display: flex;
  align-items: center;
  justify-content: space-between;
  margin-bottom: 16px;
  font-weight: 300;
}
.row:last-child {
  margin-bottom: 0;
}
.row.tall {
  margin-bottom: 15px;
}
.row input[type="text"] {
  width: 142px;
  height: 48px;
  padding: 0 6px;
  border: 2px solid #c8c8c8;
  border-radius: 0;
  background: #fff;
  color: #000;
  font-size: 24px;
  font-weight: 400;
}
.row input.wide {
  width: 292px;
  height: 54px;
  background: #f3f3f3;
  color: #666;
}
.row .pick {
  width: 292px;
}
.row .pick > select {
  height: 48px;
  padding: 0 6px;
  font-size: 24px;
}
.row .pick > svg {
  margin-right: 10px;
  color: #333;
}
.styles,
.aligns {
  width: 292px;
  display: grid;
  grid-template-columns: repeat(3, 1fr);
  gap: 8px;
}
.aligns {
  grid-template-columns: repeat(4, 1fr);
  gap: 12px;
}
.styles button,
.aligns button {
  height: 48px;
  display: flex;
  align-items: center;
  justify-content: center;
  border: 2px solid #c8c8c8;
  background: #fff;
}
.styles .glyph-u {
  width: 16px;
  font-size: 26px;
  line-height: 24px;
}
.styles .glyph-s {
  font-size: 16px;
}
.aligns .on {
  border-color: #a6a6a6;
  background: #c8c8c8;
}
.switch {
  height: 48px;
  display: flex;
  align-items: center;
  gap: 16px;
}
.switch input {
  width: 78px;
  height: 36px;
  margin: 0;
  display: flex;
  align-items: center;
  padding: 0 7px;
  appearance: none;
  border: 2px solid #555;
  border-radius: 18px;
  background: #fff;
}
.switch input::before {
  content: "";
  width: 20px;
  height: 20px;
  border-radius: 50%;
  background: #333;
}
.switch input:checked {
  justify-content: flex-end;
  border-color: #742774;
  background: #742774;
}
.switch input:checked::before {
  background: #fff;
}
.pair {
  align-items: flex-start;
  margin-bottom: 8px;
}
.pair > span {
  line-height: 54px;
}
.fields {
  width: 292px;
  display: grid;
  grid-template-columns: 1fr 1fr;
  column-gap: 8px;
}
.fields label {
  height: 84px;
  display: flex;
  flex-direction: column;
  align-items: center;
  font-size: 19px;
  line-height: 36px;
}

.taskbar {
  height: 2px;
  flex: none;
  background: linear-gradient(90deg, #c1c1c1 784px, #1a1a1a 784px);
}
```
